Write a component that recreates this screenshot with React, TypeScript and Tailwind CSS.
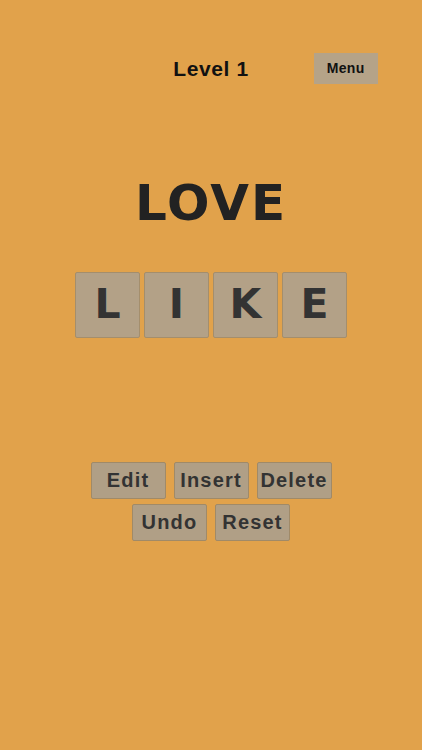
import React from 'react'

const tiles = ['L', 'I', 'K', 'E']

const Btn: React.FC<{ label: string }> = ({ label }) => (
  <button className="w-[75px] h-[37px] bg-[#b09f86] border border-[#a08a68] rounded-[2px] text-[20px] font-bold tracking-[1.2px] text-[#333333] flex items-center justify-center">
    {label}
  </button>
)

const App: React.FC = () => {
  return (
    <div className="min-h-screen w-full bg-[#e1a24b] flex flex-col items-center font-['Liberation_Sans',sans-serif]">
      {/* header */}
      <div className="w-full grid grid-cols-[1fr_auto_1fr] items-center pt-[53px]">
        <div />
        <h2 className="text-[21px] font-bold tracking-[0.6px] text-[#111111]">Level 1</h2>
        <div className="flex">
          <button className="ml-[65px] w-[64px] h-[31px] bg-[#b5a388] text-[14px] font-bold tracking-[0.4px] text-[#111111]">
            Menu
          </button>
        </div>
      </div>

      <h1 className="mt-[93px] text-[50px] leading-none font-bold tracking-[2px] text-[#222222] font-['DejaVu_Sans',sans-serif]">
        LOVE
      </h1>

      <div className="mt-[44px] flex gap-[4px]">
        {tiles.map((t, i) => (
          <div
            key={i}
            className="w-[65px] h-[66px] bg-[#b3a187] border border-[#a48e6c] rounded-[2px] flex items-center justify-center text-[41px] font-bold text-[#333333] font-['DejaVu_Sans',sans-serif]"
          >
            {t}
          </div>
        ))}
      </div>

      <div className="mt-[124px] flex flex-col items-center gap-[5px]">
        <div className="flex gap-[8px]">
          <Btn label="Edit" />
          <Btn label="Insert" />
          <Btn label="Delete" />
        </div>
        <div className="flex gap-[8px]">
          <Btn label="Undo" />
          <Btn label="Reset" />
        </div>
      </div>
    </div>
  )
}

export default App
